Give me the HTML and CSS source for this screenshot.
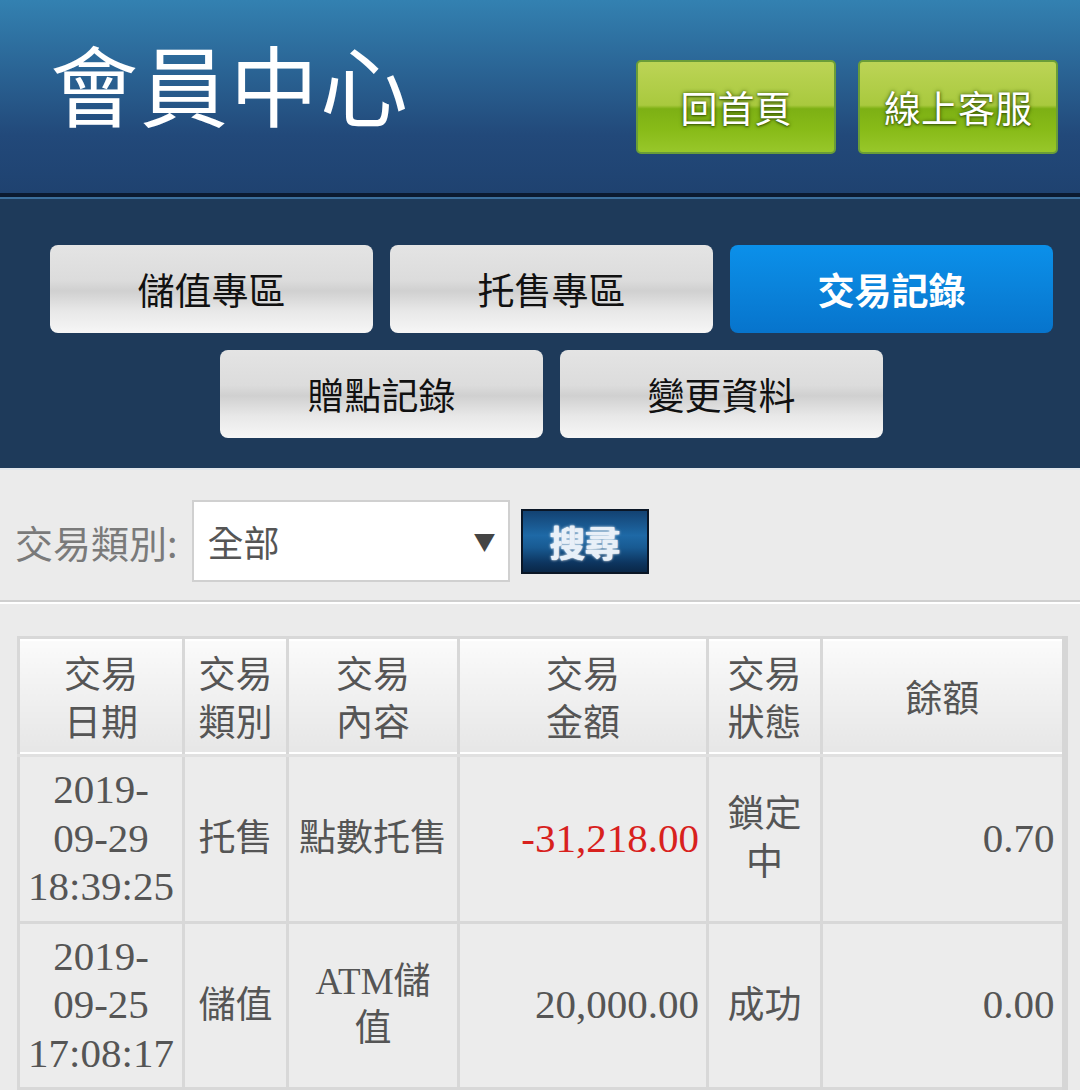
FILE: index.html
```html
<!DOCTYPE html>
<html lang="zh-Hant">
<head>
<meta charset="utf-8">
<title>會員中心</title>
<link rel="stylesheet" href="styles.css">
</head>
<body>
<header class="topbar">
  <h1 class="title">會員中心</h1>
  <div class="top-actions">
    <a class="green-btn" href="#">回首頁</a>
    <a class="green-btn" href="#">線上客服</a>
  </div>
</header>
<nav class="menu">
  <div class="menu-row">
    <a class="menu-btn" href="#">儲值專區</a>
    <a class="menu-btn" href="#">托售專區</a>
    <a class="menu-btn active" href="#">交易記錄</a>
  </div>
  <div class="menu-row">
    <a class="menu-btn" href="#">贈點記錄</a>
    <a class="menu-btn" href="#">變更資料</a>
  </div>
</nav>
<main class="content">
  <form class="filter">
    <label class="filter-label">交易類別:</label>
    <div class="select-wrap">
      <select class="select"><option>全部</option></select>
      <span class="select-arrow">▼</span>
    </div>
    <button type="button" class="search-btn">搜尋</button>
  </form>
  <div class="table-wrap">
    <table class="records">
      <colgroup>
        <col class="c1"><col class="c2"><col class="c3"><col class="c4"><col class="c5"><col class="c6">
      </colgroup>
      <thead>
        <tr>
          <th>交易<br>日期</th>
          <th>交易<br>類別</th>
          <th>交易<br>內容</th>
          <th>交易<br>金額</th>
          <th>交易<br>狀態</th>
          <th>餘額</th>
        </tr>
      </thead>
      <tbody>
        <tr>
          <td class="center"><span class="num">2019-<br>09-29<br>18:39:25</span></td>
          <td class="center">托售</td>
          <td class="center">點數托售</td>
          <td class="right"><span class="num neg">-31,218.00</span></td>
          <td class="center">鎖定<br>中</td>
          <td class="right"><span class="num">0.70</span></td>
        </tr>
        <tr>
          <td class="center"><span class="num">2019-<br>09-25<br>17:08:17</span></td>
          <td class="center">儲值</td>
          <td class="center">ATM儲<br>值</td>
          <td class="right"><span class="num">20,000.00</span></td>
          <td class="center">成功</td>
          <td class="right"><span class="num">0.00</span></td>
        </tr>
      </tbody>
    </table>
  </div>
</main>
</body>
</html>
```
FILE: styles.css
```css
* { box-sizing: border-box; }
html, body { margin: 0; padding: 0; }
body {
  background: #ebebeb;
  font-family: "Noto Sans CJK TC", "Noto Sans", sans-serif;
  color: #555;
  width: 1080px;
  overflow: hidden;
}
a { text-decoration: none; }

.topbar {
  height: 197px;
  background: linear-gradient(#3381b1, #22497a 70%, #1f4270);
  display: flex;
  align-items: flex-start;
  justify-content: space-between;
  padding: 0 22px 0 50px;
  border-bottom: 4px solid #0b1a30;
  box-shadow: 0 2px 0 #3c6f9c;
}
.title {
  margin: 38px 0 0;
  font-size: 88px;
  line-height: 1;
  font-weight: 400;
  letter-spacing: 2px;
  color: #fff;
}
.top-actions {
  display: flex;
  gap: 22px;
  margin-top: 60px;
}
.green-btn {
  width: 200px;
  height: 94px;
  border: 2px solid #6a9d38;
  border-radius: 5px;
  background: linear-gradient(#bcd456 0%, #a9c93e 48%, #7db014 52%, #88bb18 75%, #98c72a 100%);
  color: #fff;
  font-size: 37px;
  display: flex;
  align-items: center;
  justify-content: center;
  text-shadow: 0 0 4px #3d5e05, 0 1px 2px #3d5e05;
}

.menu {
  background: #1e3a5a;
  margin-top: 2px;
  padding: 46px 0 30px 23px;
  display: flex;
  flex-direction: column;
  gap: 17px;
}
.menu-row {
  display: flex;
  justify-content: center;
  gap: 17px;
}
.menu-btn {
  width: 323px;
  height: 88px;
  border-radius: 8px;
  background: linear-gradient(#e4e4e4 0%, #dcdcdc 40%, #d0d0d0 52%, #e8e8e8 75%, #f6f6f6 100%);
  color: #111;
  font-size: 37px;
  display: flex;
  align-items: center;
  justify-content: center;
}
.menu-btn.active {
  background: linear-gradient(#0b90ea 0%, #0a84dc 45%, #0774cc 100%);
  color: #fff;
  font-weight: 700;
}

.content {
  border-top: 2px solid #e2e6ec;
}
.filter {
  display: flex;
  align-items: center;
  padding: 30px 0 18px 15px;
  border-bottom: 2px solid #cfcfcf;
  box-shadow: 0 2px 0 #fff;
  margin: 0;
}
.filter-label {
  font-size: 38px;
  color: #7a7a7a;
  margin-right: 14px;
}
.select-wrap {
  position: relative;
  width: 318px;
  height: 82px;
}
.select {
  appearance: none;
  -webkit-appearance: none;
  width: 100%;
  height: 100%;
  border: 2px solid #d0d0d0;
  background: #fff;
  border-radius: 0;
  font-family: "Noto Sans CJK TC", sans-serif;
  font-size: 36px;
  color: #555;
  padding: 0 14px;
}
.select-arrow {
  position: absolute;
  right: 14px;
  top: 24px;
  font-size: 22px;
  color: #444;
  pointer-events: none;
}
.search-btn {
  margin-left: 11px;
  width: 128px;
  height: 65px;
  border: 2px solid #0a1626;
  background: linear-gradient(#134272 0%, #1e69a6 40%, #185a92 60%, #0d355f 85%, #0a2748 100%);
  color: #e8f0f8;
  font-family: "Noto Sans CJK TC", sans-serif;
  font-weight: 700;
  font-size: 36px;
  padding: 0;
  text-shadow: 0 0 3px #ffffff, 0 0 1px #fff;
  letter-spacing: -1px;
}

.table-wrap {
  padding: 34px 14px 0 17px;
}
.records {
  border-collapse: collapse;
  table-layout: fixed;
  width: 1049px;
  border-left: 3px solid #d6d6d6;
  border-right: 6px solid #d6d6d6;
  border-top: 3px solid #d8d8d8;
}
.c1 { width: 165px; }
.c2 { width: 104px; }
.c3 { width: 171px; }
.c4 { width: 249px; }
.c5 { width: 114px; }
.c6 { width: 243px; }
.records th, .records td {
  border: 3px solid #d8d8d8;
  font-size: 37px;
  line-height: 47.5px;
  color: #555;
  padding: 10px 6px;
  vertical-align: middle;
}
.records th {
  font-weight: 400;
  text-align: center;
  background: linear-gradient(#fbfbfb 0%, #f2f2f2 40%, #e6e6e6 100%);
  border-bottom: 3px solid #e0e0e0;
  box-shadow: inset 0 -2px 0 #fff, inset 0 2px 0 #fff;
}
.records td {
  background: #ececec;
  font-family: "Liberation Serif", "Noto Sans CJK TC", serif;
  padding: 9px 7px;
}
.records td.center { text-align: center; }
.records td.right { text-align: right; }
.num {
  font-family: "Liberation Serif", serif;
  font-size: 41px;
}
.neg { color: #d8211d; }
```
